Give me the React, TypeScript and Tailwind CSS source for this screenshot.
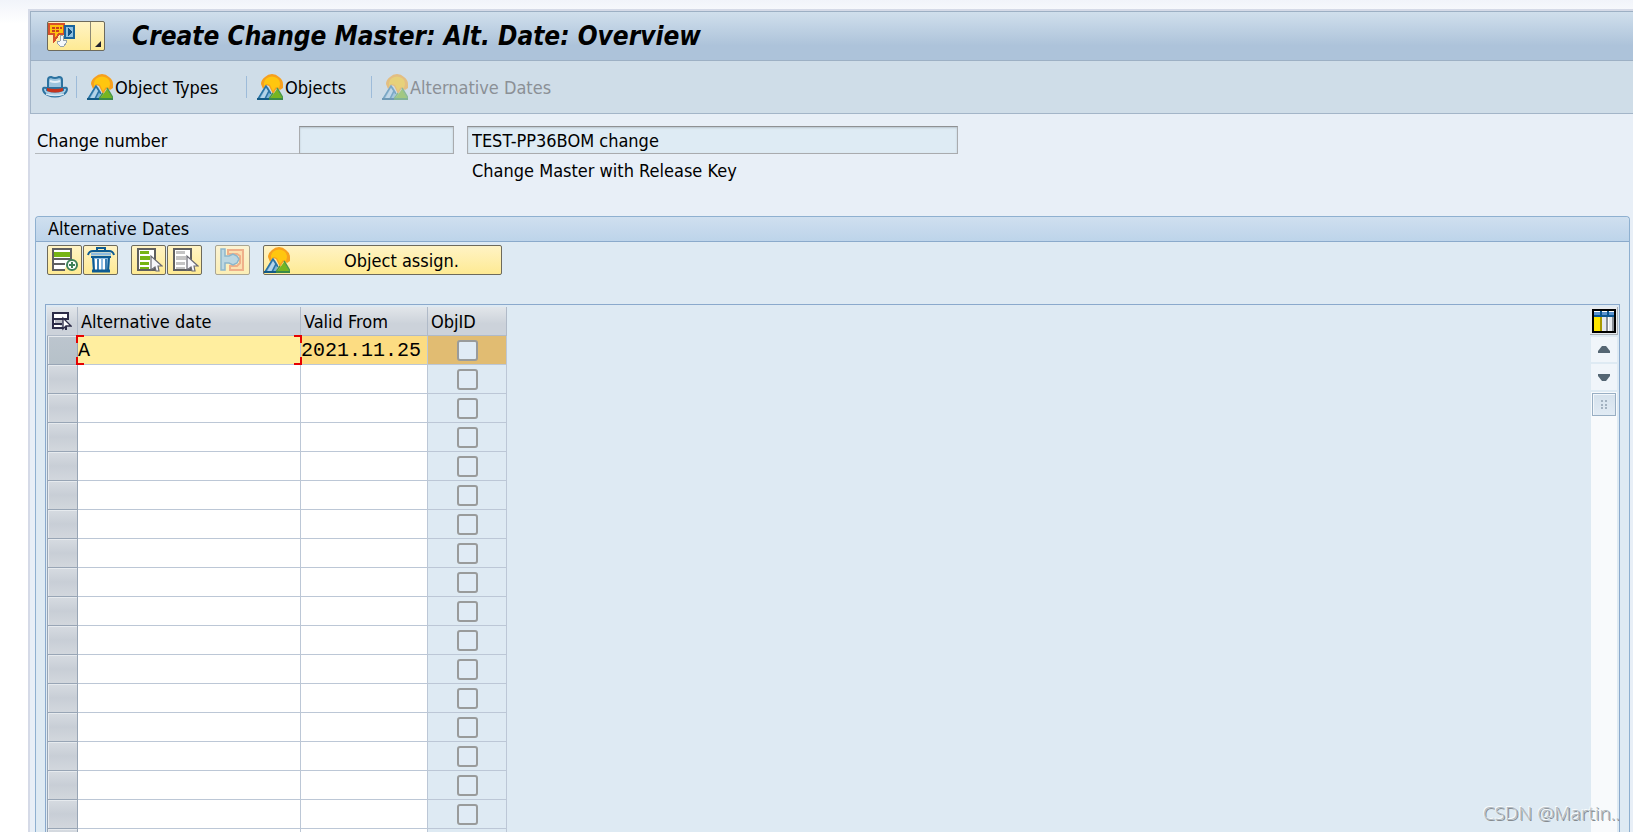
import type { ReactNode } from "react";
import clsx from "clsx";

const ROW_COUNT = 18;

const rows = Array.from({ length: ROW_COUNT }, (_, i) => ({
  id: i,
  name: i === 0 ? "A" : "",
  validFrom: i === 0 ? "2021.11.25" : "",
}));

/* Icons */

const ObjectsIcon = ({ className }: { className?: string }) => (
  <svg viewBox="0 0 26 26" className={clsx("h-[26px] w-[26px] shrink-0", className)} aria-hidden="true">
    <path d="M4 10q0-4 4-7 3-3 7-3t7 3q4 3 4 7v4l-3 2-3-2-4 6-4-8-3-1-3 4z" fill="#f7a01e" />
    <path d="M7 9q0-3 3-5 5-3 10 0 3 2 3 6l-1 4-3-1-3 4-3-6-3-1-3 2z" fill="#ffc60f" />
    <path d="M0 26L8 12l3 1 3 5-2 8z" fill="#7db2d6" />
    <path d="M3 25l6-11 2 3-4 8z" fill="#b4d3e8" />
    <path d="M1 25L9 12l5 8" fill="none" stroke="#2a73a3" strokeWidth="1.5" />
    <path d="M8 25l4-8" stroke="#2a73a3" strokeWidth="1.5" />
    <path d="M12 26l8-11 6 10v1z" fill="#77b51f" />
    <path d="M12 25l4-6M20 14l3 5 3 5" fill="none" stroke="#4b9a45" strokeWidth="1.5" />
    <path d="M0 25h12" stroke="#145a86" strokeWidth="2" />
    <path d="M12 25h14" stroke="#3a8a48" strokeWidth="2" />
  </svg>
);

const HatIcon = () => (
  <svg viewBox="0 0 26 22" className="h-[22px] w-[26px]" aria-hidden="true">
    <path
      d="M1 13q0-2 4-1v2q8 3 16 0v-2q4-1 4 1 0 4-5 6-7 3-14 0-5-2-5-6z"
      fill="#a9cce3"
      stroke="#2b72a0"
      strokeWidth="2"
    />
    <path d="M6 12V4q0-3 3-3 4 2 8 0 3 0 3 3v8z" fill="#9cc5df" stroke="#2b72a0" strokeWidth="2" />
    <path d="M8 5q5 2 10 0" fill="none" stroke="#e4f0f8" strokeWidth="2" />
    <path d="M5 12q8 2 16 0v3q-8 3-16 0z" fill="#c6331c" />
    <path d="M4 18q9 3 18 0" fill="none" stroke="#d5e7f3" strokeWidth="1.5" />
  </svg>
);

const ServicesIcon = () => (
  <svg viewBox="0 0 28 24" className="h-6 w-7" aria-hidden="true" shapeRendering="crispEdges">
    <path d="M1 1h15v10h-5l-5 7v-7H1z" fill="#ffc20e" stroke="#d5512a" strokeWidth="2" />
    <path d="M4 4h3v2H4zM8 4h3v2H8zM12 4h2v2h-2zM4 7h3v2H4zM8 7h3v2H8z" fill="#c8401f" />
    <path d="M17 3h9v12h-9z" fill="#8fc0e0" stroke="#1a659c" strokeWidth="2" />
    <path d="M20 5v8l4-4z" fill="#0f4f83" />
    <path d="M13 12l2 1v4h3l1 2-3 4h-4l-3-3 1-2h2z" fill="#f4f8fb" stroke="#97a4ad" />
  </svg>
);

const InsertRowIcon = () => (
  <svg viewBox="0 0 28 26" className="h-[26px] w-7" aria-hidden="true">
    <path d="M2 2h18v9l-7 12H2z" fill="#fff" />
    <path d="M2 1v23M1 2h20M20 1v12M2 12h18M2 17h12M1 23h13" fill="none" stroke="#5f5f5f" strokeWidth="2" />
    <path d="M3 5h16v5H3z" fill="#76b414" />
    <circle cx="21" cy="18" r="5" fill="#fff" stroke="#3d8058" strokeWidth="2" />
    <path d="M21 15v6M18 18h6" stroke="#3d8058" strokeWidth="2" />
  </svg>
);

const TrashIcon = () => (
  <svg viewBox="0 0 28 26" className="h-[26px] w-7" aria-hidden="true">
    <path d="M10 4V1h8v3" fill="none" stroke="#0d5b92" strokeWidth="2" />
    <path d="M1 8q1-4 5-4h16q4 0 5 4" fill="none" stroke="#0d5b92" strokeWidth="2" />
    <path d="M4 7h20" stroke="#8dbbdf" strokeWidth="3" />
    <path d="M5 10h18l-1 14H6z" fill="#8fbde2" />
    <path d="M4 10h20M6 10l1 14M22 10l-1 14" stroke="#0d5b92" strokeWidth="2" />
    <path d="M9 12v11M13 12v11M17 12v11" stroke="#fff" strokeWidth="2" />
    <path d="M11 12v11M19 12v11" stroke="#3c7fb3" strokeWidth="2" />
    <path d="M5 24h18" stroke="#0d5b92" strokeWidth="3" />
  </svg>
);

const SelectIcon = ({ fill }: { fill: string }) => (
  <svg viewBox="0 0 28 26" className="h-[26px] w-7" aria-hidden="true">
    <path d="M3 2h17v21H3z" fill="#fff" stroke="#5f5f5f" strokeWidth="2" />
    <path d="M5 4h9v3H5zM5 9h10v4H5zM5 15h9v3H5zM5 20h9v2H5z" fill={fill} />
    <path d="M16 9v14l4-3 1 4h3l-1-5h4z" fill="#f7f7fb" stroke="#6a6a72" strokeWidth="1.2" />
  </svg>
);

const AssignIcon = () => (
  <svg viewBox="0 0 28 26" className="h-[26px] w-7" aria-hidden="true">
    <path d="M9 3h15v20H11v-4h7l3-3V9l-3-2H9z" fill="#fce0b0" stroke="#efb08a" strokeWidth="2" />
    <path d="M2 2h4v7h4l4-2 4 2 2 3-2 4-4 2-4-2H6v7H2z" fill="#bcd7e2" stroke="#8db6cb" strokeWidth="1.5" />
  </svg>
);

const SelectAllIcon = () => (
  <svg viewBox="0 0 20 19" className="h-[19px] w-5" aria-hidden="true">
    <path d="M1 1h15v6H1zM1 7v9h10M1 12h9" fill="#fff" stroke="#2c2c48" strokeWidth="2" />
    <path d="M3 8h8v3H3z" fill="#b9bcc4" />
    <path d="M11 6v11l3-3h5z" fill="#fff" stroke="#2c2c48" strokeWidth="1.3" />
    <path d="M14 14v4" stroke="#2c2c48" strokeWidth="2" />
  </svg>
);

const ConfigIcon = () => (
  <svg viewBox="0 0 24 24" className="h-6 w-6" aria-hidden="true" shapeRendering="crispEdges">
    <path d="M0 0h24v24H0z" fill="#000" />
    <path d="M2 2h20v20H2z" fill="#fff" />
    <path d="M2 3h6v4H2zM10 3h5v4h-5zM17 3h5v4h-5z" fill="#5b93cf" />
    <path d="M2 6h20v2H2zM8 2h2v5H8zM15 2h2v5h-2z" fill="#0b5591" />
    <path d="M2 8h6v14H2z" fill="#ffe600" />
    <path d="M8 8h2v14H8z" fill="#a99a00" />
    <path d="M10 8h4v14h-4zM17 8h3v14h-3z" fill="#e6eaef" />
    <path d="M14 8h2v14h-2zM20 8h2v14h-2z" fill="#8b9097" />
  </svg>
);

/* Controls */

type ButtonProps = { label: string; children: ReactNode; className?: string; disabled?: boolean };

const IconButton = ({ label, children, className, disabled }: ButtonProps) => (
  <button
    type="button"
    aria-label={label}
    disabled={disabled}
    className={clsx(
      "flex h-[30px] w-[35px] items-center justify-center rounded-xs border bg-linear-to-b",
      disabled ? "border-[#a9a593] from-[#fbf3d3] to-[#fbeeb5]" : "border-[#6d6a5c] from-[#fff3c4] to-[#feea93]",
      className,
    )}
  >
    {children}
  </button>
);

const ToolButton = ({ children, className, disabled }: { children: string; className?: string; disabled?: boolean }) => (
  <button
    type="button"
    disabled={disabled}
    className={clsx("flex items-center gap-0.5 whitespace-nowrap", disabled && "text-[#8b9096]", className)}
  >
    <ObjectsIcon className={disabled ? "opacity-50" : ""} />
    <span className="pt-0.5">{children}</span>
  </button>
);

const Separator = () => <div className="h-[22px] w-px bg-[#9dbbd9]" />;

const fieldStyle =
  "h-7 border border-[#a9abae] border-t-[#8f9193] bg-[#deebf4] shadow-[inset_0_1px_2px_#b9c4cd] outline-none";

export default function App() {
  return (
    <div className="h-screen overflow-hidden bg-linear-to-b from-[#f1f4fa] to-white to-[24px] pt-[9px] pl-7 font-['DejaVu_Sans_Condensed','Noto_Sans',sans-serif] text-[18px] leading-6 text-black">
      <main className="relative flex h-full flex-col border-t-2 border-l-2 border-[#d5dae7] bg-[#e8eff7]">
        {/* Title bar */}
        <header className="flex h-[50px] shrink-0 items-center border border-r-0 border-[#9db0c4] bg-linear-to-b from-[#d0dfec] to-[#adc3da] to-70% pl-4">
          <button
            type="button"
            aria-label="Services for object"
            className="flex h-[30px] w-[58px] rounded-xs border border-[#6d6a5c] bg-linear-to-b from-[#fff3c4] to-[#feea93]"
          >
            <span className="flex h-full w-[43px] items-start border-r border-[#8d8974] pt-px">
              <ServicesIcon />
            </span>
            <svg viewBox="0 0 6 6" className="mt-[19px] ml-1 h-1.5 w-1.5" aria-hidden="true">
              <path d="M6 0v6H0z" fill="#22222e" />
            </svg>
          </button>
          <h1 className="ml-[27px] text-[26px] leading-8 font-bold whitespace-nowrap italic">
            Create Change Master: Alt. Date: Overview
          </h1>
        </header>

        {/* Application toolbar */}
        <nav className="flex h-[53px] shrink-0 items-center border-b border-l border-[#a3b5c8] bg-[#cfdde8] pl-[11px]">
          <button type="button" aria-label="Header">
            <HatIcon />
          </button>
          <div className="ml-2">
            <Separator />
          </div>
          <ToolButton className="ml-2.5 w-[159px]">Object Types</ToolButton>
          <Separator />
          <ToolButton className="ml-2.5 w-[114px]">Objects</ToolButton>
          <Separator />
          <ToolButton className="ml-2.5" disabled>
            Alternative Dates
          </ToolButton>
        </nav>

        {/* Change master header */}
        <section className="grid shrink-0 grid-cols-[264px_155px_504px] gap-x-0 pt-3 pl-[5px]">
          <label htmlFor="change-number" className="h-7 border-b border-[#b4b9bd] pt-[3px] pl-0.5">
            Change number
          </label>
          <input id="change-number" readOnly className={fieldStyle} />
          <input
            aria-label="Description"
            readOnly
            defaultValue="TEST-PP36BOM change"
            className={clsx(fieldStyle, "ml-[13px] px-1")}
          />
          <p className="col-start-3 ml-[18px] pt-[5px] whitespace-nowrap">Change Master with Release Key</p>
        </section>

        {/* Alternative dates */}
        <section className="mt-[33px] mr-[3px] ml-[5px] flex min-h-0 flex-1 flex-col rounded-t-sm border border-b-0 border-[#8eb0d0] bg-[#deeaf3]">
          <h2 className="h-[25px] shrink-0 rounded-t-sm border-b border-[#8aaacb] bg-linear-to-b from-[#cfdfef] to-[#bdd4ea] pl-3">
            Alternative Dates
          </h2>
          <div className="flex shrink-0 gap-px pt-[3px] pl-[11px]">
            <IconButton label="Insert row">
              <InsertRowIcon />
            </IconButton>
            <IconButton label="Delete row">
              <TrashIcon />
            </IconButton>
            <IconButton label="Select all" className="ml-3">
              <SelectIcon fill="#76b414" />
            </IconButton>
            <IconButton label="Deselect all">
              <SelectIcon fill="#c4c4c4" />
            </IconButton>
            <IconButton label="Assign" className="ml-3" disabled>
              <AssignIcon />
            </IconButton>
            <button
              type="button"
              className="ml-3 flex h-[30px] w-[239px] items-center rounded-xs border border-[#6d6a5c] bg-linear-to-b from-[#fff3c4] to-[#feea93]"
            >
              <ObjectsIcon />
              <span className="flex-1 pt-0.5 pl-3">Object assign.</span>
            </button>
          </div>

          <div className="mx-[9px] mt-[29px] flex min-h-0 flex-1 justify-between overflow-hidden border border-b-0 border-[#8aa9cc] pt-0.5 pr-px pl-px">
            <table className="h-fit w-[460px] table-fixed border-separate border-spacing-0 text-left">
              <colgroup>
                <col className="w-[31px]" />
                <col className="w-[223px]" />
                <col className="w-[127px]" />
                <col className="w-[79px]" />
              </colgroup>
              <thead>
                <tr className="h-[29px] *:border-r *:border-b *:border-[#b0bac8] *:bg-linear-to-b *:from-[#e2e6ea] *:to-[#ccd2da] *:to-60% *:p-0 *:font-normal">
                  <th aria-label="Select" className="border-r-2">
                    <button type="button" aria-label="Select all rows" className="ml-[5px] block">
                      <SelectAllIcon />
                    </button>
                  </th>
                  <th>
                    <div className="pt-0.5 pl-[3px]">Alternative date</div>
                  </th>
                  <th>
                    <div className="pt-0.5 pl-[3px]">Valid From</div>
                  </th>
                  <th>
                    <div className="pt-0.5 pl-[3px]">ObjID</div>
                  </th>
                </tr>
              </thead>
              <tbody>
                {rows.map((row, i) => (
                  <tr key={row.id} className="h-[29px] *:border-r *:border-b *:border-[#bcc7d6] *:p-0">
                    <td
                      className={clsx(
                        "border-r-2 border-l border-[#98a5b5]! bg-linear-to-b shadow-[inset_1px_1px_0_#e6eaee]",
                        i === 0 ? "from-[#bcc5ce] to-[#b6c1c9]" : "from-[#d6dbe1] via-[#c8ced6] to-[#d2d7dd]",
                      )}
                    />
                    <td className={clsx("relative", i === 0 ? "bg-[#ffee9f]" : "bg-white")}>
                      <input
                        aria-label={`Alternative date ${i + 1}`}
                        defaultValue={row.name}
                        className="block h-7 w-full font-['Liberation_Mono',monospace] text-[20px] outline-none"
                      />
                      {/* focus corners */}
                      {i === 0 && (
                        <div className="pointer-events-none absolute -inset-x-0.5 -inset-y-px" aria-hidden="true">
                          <i className="absolute top-0 left-0 h-2 w-2 border-t-2 border-l-2 border-[#e60000]" />
                          <i className="absolute top-0 right-0 h-2 w-2 border-t-2 border-r-2 border-[#e60000]" />
                          <i className="absolute bottom-0 left-0 h-2 w-2 border-b-2 border-l-2 border-[#e60000]" />
                          <i className="absolute right-0 bottom-0 h-2 w-2 border-r-2 border-b-2 border-[#e60000]" />
                        </div>
                      )}
                    </td>
                    <td className={i === 0 ? "bg-[#fcdc82]" : "bg-white"}>
                      <input
                        aria-label={`Valid from ${i + 1}`}
                        defaultValue={row.validFrom}
                        className="block h-7 w-full font-['Liberation_Mono',monospace] text-[20px] outline-none"
                      />
                    </td>
                    <td className={i === 0 ? "bg-[#e1bc72]" : "bg-[#deeaf3]"}>
                      <input
                        type="checkbox"
                        aria-label={`ObjID ${i + 1}`}
                        className="mx-auto block h-[21px] w-[21px] appearance-none rounded-[3px] border-2 border-[#999b9b] bg-[#e0ebf5]"
                      />
                    </td>
                  </tr>
                ))}
              </tbody>
            </table>

            {/* Vertical scroll bar */}
            <div className="flex w-7 flex-col items-center">
              <button
                type="button"
                aria-label="Configuration"
                className="flex h-7 w-7 shrink-0 items-center justify-center border-r border-b border-[#aab0b6] bg-[#e8ebee]"
              >
                <ConfigIcon />
              </button>
              <button
                type="button"
                aria-label="Scroll up"
                className="mt-0.5 flex h-[25px] w-[26px] shrink-0 items-center justify-center bg-[#f0f5fa]"
              >
                <svg viewBox="0 0 12 7" className="h-[7px] w-3" aria-hidden="true">
                  <path d="M0 7V5l4-5h4l4 5v2z" fill="#556673" />
                </svg>
              </button>
              <button
                type="button"
                aria-label="Scroll down"
                className="mt-0.5 flex h-[26px] w-[26px] shrink-0 items-center justify-center bg-[#f0f5fa]"
              >
                <svg viewBox="0 0 12 7" className="h-[7px] w-3" aria-hidden="true">
                  <path d="M0 0v2l4 5h4l4-5V0z" fill="#556673" />
                </svg>
              </button>
              <div className="mt-0.5 w-[26px] flex-1 bg-[#f8fafc] pt-px">
                <div className="mx-auto flex h-[23px] w-6 items-center justify-center border border-[#98aec3] bg-linear-to-b from-[#d5e1ec] to-[#e1ebf4] shadow-[inset_1px_1px_0_#f2f7fb]">
                  <svg viewBox="0 0 7 9" className="h-[9px] w-[7px]" aria-hidden="true">
                    <path d="M0 0h2v2H0zM4 0h2v2H4zM0 4h2v2H0zM4 4h2v2H4zM0 7h2v2H0zM4 7h2v2H4z" fill="#a2b1c0" />
                  </svg>
                </div>
              </div>
            </div>
          </div>
        </section>

        <p className="absolute right-[13px] bottom-[7px] font-['Noto_Sans',sans-serif] text-[19px] leading-6 font-light text-[#b4bbc0] [text-shadow:-1px_-1px_0_#f7fafc,1px_1px_0_#858b90]">
          CSDN @Martin..
        </p>
      </main>
    </div>
  );
}
